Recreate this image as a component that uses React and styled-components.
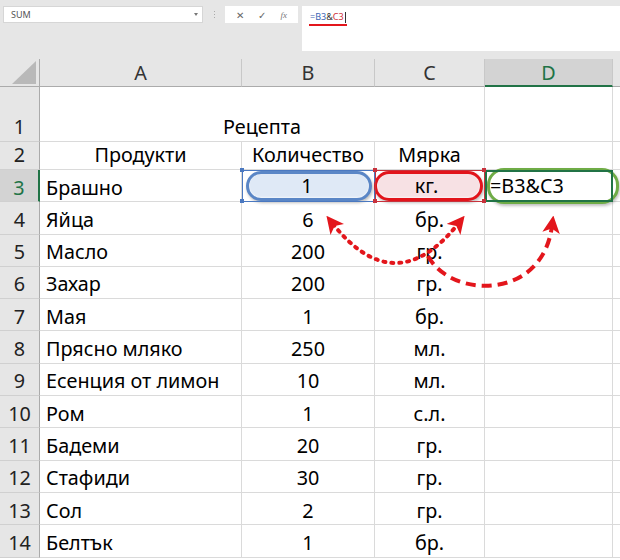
import React from 'react'
import styled, { createGlobalStyle, css } from 'styled-components'

const GlobalStyle = createGlobalStyle`
  body { margin: 0; background: #fff; }
  * { box-sizing: border-box; }
`

const FONT = `"Noto Sans", "Liberation Sans", sans-serif`
const RED = '#e3161c'
const SIZE = '19.8px'

const Page = styled.div`
  position: relative;
  width: 620px;
  height: 560px;
  overflow: hidden;
  font-family: ${FONT};
`

// formula bar
const Bar = styled.div`
  height: 59px;
  background: #e6e6e6;
  display: flex;
  align-items: flex-start;
  padding: 6px 0 0 3px;
`

const NameBox = styled.div`
  width: 200px;
  height: 17px;
  background: #fff;
  border: 1px solid #d6d6d6;
  display: flex;
  align-items: center;
  justify-content: space-between;
  padding: 0 4px 0 7px;
  font-size: 9px;
  color: #555;
`

const Caret = styled.span`
  width: 0;
  height: 0;
  border-left: 2.5px solid transparent;
  border-right: 2.5px solid transparent;
  border-top: 3px solid #777;
`

const Grip = styled.div`
  width: 22px;
  height: 17px;
  display: flex;
  flex-direction: column;
  align-items: center;
  justify-content: center;
  gap: 2px;
  span {
    width: 1px;
    height: 1px;
    background: #aaa;
  }
`

const Buttons = styled.div`
  width: 73px;
  height: 17px;
  background: #fff;
  display: flex;
  align-items: center;
  justify-content: space-around;
  padding: 0 4px;
  color: #666;
  font-size: 10px;
`

const Fx = styled.i`
  font-family: "Liberation Serif", serif;
  font-size: 9px;
  color: #777;
`

const FormulaInput = styled.div`
  flex: 1;
  margin-left: 4px;
  height: 45px;
  background: #fff;
  padding: 4px 0 0 7px;
  font-size: 9px;
`

const Formula = styled.span`
  display: inline-block;
  padding: 0 1px 1px;
  border-bottom: 2px solid ${RED};
`

const Ref = styled.span`
  color: ${p => p.$c};
`

const Cursor = styled.span`
  display: inline-block;
  width: 1px;
  height: 11px;
  background: #333;
  vertical-align: middle;
  margin-left: 1px;
`

// sheet
const Sheet = styled.div`
  display: grid;
  grid-template-columns: 40px 202px 133px 110px 128px 1fr;
  grid-template-rows: 28px 55px 28px repeat(12, 32.3px);
`

const HeadCell = styled.div`
  background: ${p => (p.$active ? '#d3d3d3' : '#e6e6e6')};
  color: ${p => (p.$active ? '#217346' : '#333')};
  font-size: ${SIZE};
  display: flex;
  align-items: center;
  justify-content: center;
  border-right: 1px solid #c8c8c8;
  border-bottom: ${p => (p.$active ? '2px solid #217346' : '1px solid #ababab')};
`

const Corner = styled.div`
  background: #e6e6e6;
  border-right: 1px solid #ababab;
  border-bottom: 1px solid #ababab;
  display: flex;
  align-items: flex-end;
  justify-content: flex-end;
  padding: 0 3px 2px 0;
`

const RowHead = styled.div`
  background: ${p => (p.$active ? '#d3d3d3' : '#e6e6e6')};
  color: ${p => (p.$active ? '#217346' : '#222')};
  font-size: ${SIZE};
  line-height: 1.2;
  display: flex;
  align-items: flex-end;
  justify-content: center;
  padding-bottom: 2px;
  border-right: ${p => (p.$active ? '2px solid #217346' : '1px solid #ababab')};
  border-bottom: 1px solid #d0d0d0;
`

const Cell = styled.div`
  position: relative;
  display: flex;
  align-items: flex-end;
  justify-content: ${p => p.$align || 'flex-start'};
  padding: 0 6px 2px;
  font-size: ${SIZE};
  line-height: 1.2;
  color: #000;
  border-right: 1px solid #dadada;
  border-bottom: 1px solid #dadada;
  white-space: nowrap;
  ${p => p.$span && css`grid-column: span ${p.$span};`}
`

const handle = c => css`
  &::before, &::after {
    content: '';
    position: absolute;
    width: 4px;
    height: 4px;
    background: ${c};
    z-index: 2;
  }
`

const RefCell = styled(Cell)`
  padding: 0;
  align-items: stretch;
  outline: 1px solid ${p => p.$ring};
  outline-offset: -1px;
  ${p => handle(p.$ring)}
  &::before { left: -2px; top: -2px; }
  &::after { left: -2px; bottom: -2px; }
`

const EdgeHandles = styled.span`
  position: absolute;
  right: -2px;
  top: -2px;
  bottom: -2px;
  width: 4px;
  z-index: 2;
  &::before, &::after {
    content: '';
    position: absolute;
    left: 0;
    width: 4px;
    height: 4px;
    background: ${p => p.$c};
  }
  &::before { top: 0; }
  &::after { bottom: 0; }
`

const ActiveCell = styled(Cell)`
  padding: 0;
  align-items: stretch;
  outline: 2px solid #217346;
  outline-offset: -2px;
  z-index: 1;
`

const Pill = styled.div`
  flex: 1;
  display: flex;
  align-items: center;
  justify-content: ${p => p.$align || 'center'};
  margin: ${p => p.$margin || '1px 3px 0 4px'};
  padding: 0 4px 0 0;
  border-radius: 17px;
  border: 3px solid ${p => p.$ring};
  background: ${p => p.$fill};
  box-shadow: 1px 2px 3px rgba(0, 0, 0, 0.25), inset 0 -1px 2px rgba(255, 255, 255, 0.6);
  font-size: ${SIZE};
  line-height: 1;
`

const Overlay = styled.svg`
  position: absolute;
  left: 0;
  top: 0;
  pointer-events: none;
`

const rows = [
  ['Яйца', '6', 'бр.'],
  ['Масло', '200', 'гр.'],
  ['Захар', '200', 'гр.'],
  ['Мая', '1', 'бр.'],
  ['Прясно мляко', '250', 'мл.'],
  ['Есенция от лимон', '10', 'мл.'],
  ['Ром', '1', 'с.л.'],
  ['Бадеми', '20', 'гр.'],
  ['Стафиди', '30', 'гр.'],
  ['Сол', '2', 'гр.'],
  ['Белтък', '1', 'бр.'],
]

const App = () => {
  return (
    <Page>
      <GlobalStyle />
      <Bar>
        <NameBox>
          SUM
          <Caret />
        </NameBox>
        <Grip><span /><span /><span /></Grip>
        <Buttons>
          <span>✕</span>
          <span>✓</span>
          <Fx>fx</Fx>
        </Buttons>
        <FormulaInput>
          <Formula>
            <Ref $c="#3b64b4">=B3</Ref>
            <Ref $c="#333">&amp;</Ref>
            <Ref $c="#d0303a">C3</Ref>
            <Cursor />
          </Formula>
        </FormulaInput>
      </Bar>

      <Sheet>
        <Corner>
          <svg width="24" height="23" viewBox="0 0 24 23">
            <path d="M24 0 L24 23 L0 23 Z" fill="#b9b9b9" />
          </svg>
        </Corner>
        <HeadCell>A</HeadCell>
        <HeadCell>B</HeadCell>
        <HeadCell>C</HeadCell>
        <HeadCell $active>D</HeadCell>
        <HeadCell />

        <RowHead>1</RowHead>
        <Cell $span={3} $align="center">Рецепта</Cell>
        <Cell />
        <Cell />

        <RowHead>2</RowHead>
        <Cell $align="center">Продукти</Cell>
        <Cell $align="center">Количество</Cell>
        <Cell $align="center">Мярка</Cell>
        <Cell />
        <Cell />

        <RowHead $active>3</RowHead>
        <Cell>Брашно</Cell>
        <RefCell $ring="#4a78c0">
          <Pill $ring="#5a86c6" $fill="#dfe9f6" $margin="1px 2px 0 4px">1</Pill>
        </RefCell>
        <RefCell $ring="#c8323c">
          <Pill $ring="#e2141b" $fill="#f7e1e4" $margin="1px 1px 0 -1px">кг.</Pill>
          <EdgeHandles $c="#c8323c" />
        </RefCell>
        <ActiveCell>
          <Pill $ring="#6fac46" $fill="#fff" $align="flex-start" $margin="-2px -7px -3px 2px">
            =B3&amp;C3
          </Pill>
        </ActiveCell>
        <Cell />

        {rows.map((r, i) => (
          <React.Fragment key={r[0]}>
            <RowHead>{i + 4}</RowHead>
            <Cell>{r[0]}</Cell>
            <Cell $align="center">{r[1]}</Cell>
            <Cell $align="center">{r[2]}</Cell>
            <Cell />
            <Cell />
          </React.Fragment>
        ))}
      </Sheet>

      <Overlay width="620" height="560" viewBox="0 0 620 560">
        <defs>
          <marker id="head" viewBox="0 0 10 10" refX="4" refY="5" markerWidth="4.4" markerHeight="4.4" orient="auto-start-reverse">
            <path d="M0 0 L10 5 L0 10 L2.5 5 Z" fill={RED} />
          </marker>
        </defs>
        <path
          d="M333 224 Q395 302 458 224"
          fill="none"
          stroke={RED}
          strokeWidth="4"
          strokeDasharray="2 6"
          strokeLinecap="round"
          markerStart="url(#head)"
          markerEnd="url(#head)"
        />
        <path
          d="M428 256 C450 298 542 302 552 226"
          fill="none"
          stroke={RED}
          strokeWidth="4"
          strokeDasharray="10 6"
          markerEnd="url(#head)"
        />
      </Overlay>
    </Page>
  )
}

export default App
